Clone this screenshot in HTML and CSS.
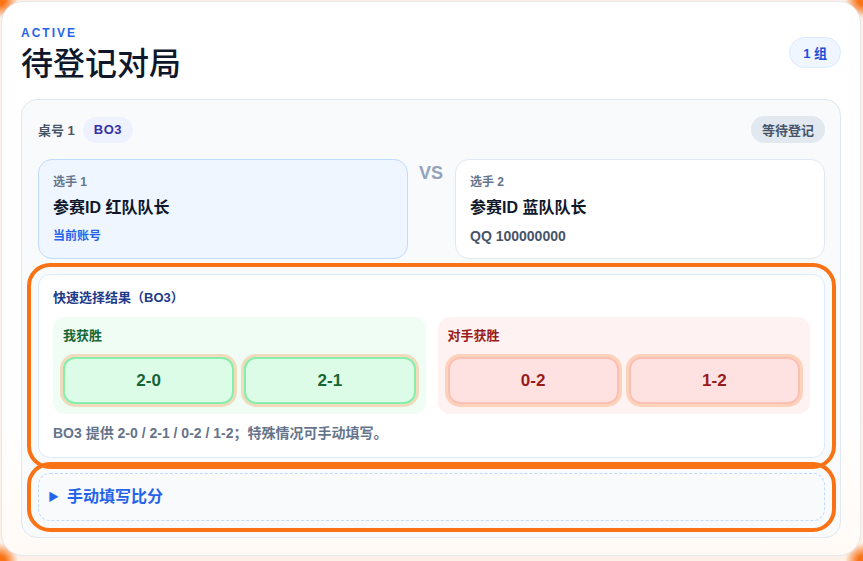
FILE: index.html
```html
<!DOCTYPE html>
<html lang="zh-CN">
<head>
<meta charset="utf-8">
<title>待登记对局</title>
<link rel="stylesheet" href="styles.css">
</head>
<body>
<section class="card">
  <header class="card-head">
    <div class="head-text">
      <div class="eyebrow">ACTIVE</div>
      <h1 class="title">待登记对局</h1>
    </div>
    <span class="count-pill">1 组</span>
  </header>

  <div class="match">
    <div class="match-head">
      <div class="table-info">
        <span class="table-no">桌号 1</span>
        <span class="bo-pill">BO3</span>
      </div>
      <span class="status-pill">等待登记</span>
    </div>

    <div class="players">
      <div class="player player-me">
        <div class="player-label">选手 1</div>
        <div class="player-name">参赛ID 红队队长</div>
        <div class="player-meta meta-me">当前账号</div>
      </div>
      <div class="vs">VS</div>
      <div class="player">
        <div class="player-label">选手 2</div>
        <div class="player-name">参赛ID 蓝队队长</div>
        <div class="player-meta">QQ 100000000</div>
      </div>
    </div>

    <div class="quick focused">
      <div class="quick-title">快速选择结果（BO3）</div>
      <div class="groups">
        <div class="group group-win">
          <div class="group-label">我获胜</div>
          <div class="btns">
            <button class="score score-win">2-0</button>
            <button class="score score-win">2-1</button>
          </div>
        </div>
        <div class="group group-lose">
          <div class="group-label">对手获胜</div>
          <div class="btns">
            <button class="score score-lose">0-2</button>
            <button class="score score-lose">1-2</button>
          </div>
        </div>
      </div>
      <div class="hint">BO3 提供 2-0 / 2-1 / 0-2 / 1-2；特殊情况可手动填写。</div>
    </div>

    <details class="manual focused">
      <summary class="manual-summary"><span class="tri">▶</span>手动填写比分</summary>
    </details>
  </div>
</section>
</body>
</html>
```

FILE: styles.css
```css
* { box-sizing: border-box; }

html, body {
  margin: 0;
  height: 100%;
}

body {
  padding: 1px 2px 4px 1px;
  font-family: "Liberation Sans", "Noto Sans CJK SC", sans-serif;
  color: #0f172a;
  background:
    radial-gradient(circle at 0 0, #f97316 0, #f97316 5px, rgba(249,115,22,0) 18px),
    radial-gradient(circle at 100% 0, #f97316 0, #f97316 5px, rgba(249,115,22,0) 18px),
    radial-gradient(circle at 0 100%, #f97316 0, #f97316 5px, rgba(249,115,22,0) 18px),
    radial-gradient(circle at 100% 100%, #f97316 0, #f97316 5px, rgba(249,115,22,0) 18px),
    #fcf0e8;
}

.card {
  border: 1px solid #e5e7eb;
  border-radius: 22px;
  background: linear-gradient(180deg, #ffffff 0%, #ffffff 75%, #fffaf6 100%);
  padding: 23px 19px 17px 19px;
}

.card-head {
  display: flex;
  justify-content: space-between;
  align-items: center;
  margin-bottom: 16px;
}

.eyebrow {
  font-size: 12px;
  line-height: 16px;
  font-weight: 700;
  letter-spacing: 2px;
  color: #2563eb;
}

.title {
  margin: 4px 0 0 0;
  font-size: 32px;
  line-height: 38px;
  font-weight: 500;
  color: #0f172a;
}

.count-pill {
  display: inline-flex;
  align-items: center;
  height: 31px;
  padding: 0 13px;
  margin-bottom: 3px;
  border-radius: 999px;
  border: 1px solid #dbeafe;
  background: #eff6ff;
  color: #1d4ed8;
  font-size: 13px;
  font-weight: 700;
}

.match {
  border: 1px solid #e2e8f0;
  border-radius: 16px;
  background: #f8fafc;
  padding: 16px 15px 16px 16px;
  display: flex;
  flex-direction: column;
  gap: 15px;
}

.match-head {
  display: flex;
  justify-content: space-between;
  align-items: center;
  margin-bottom: 1px;
}

.table-info {
  display: flex;
  align-items: center;
  gap: 8px;
}

.table-no {
  font-size: 13px;
  font-weight: 700;
  color: #475569;
}

.bo-pill {
  display: inline-flex;
  align-items: center;
  height: 26px;
  padding: 0 11px;
  border-radius: 999px;
  background: #eef2ff;
  color: #3730a3;
  font-size: 13px;
  font-weight: 700;
  letter-spacing: 0.5px;
}

.status-pill {
  display: inline-flex;
  align-items: center;
  height: 27px;
  padding: 0 11px;
  border-radius: 999px;
  background: #e2e8f0;
  color: #475569;
  font-size: 13px;
  font-weight: 700;
}

.players {
  display: grid;
  grid-template-columns: 1fr auto 1fr;
  gap: 11px;
}

.player {
  border: 1px solid #e2e8f0;
  border-radius: 14px;
  background: #ffffff;
  padding: 14px 14px 14px 14px;
}

.player-me {
  background: #eff6ff;
  border-color: #bfdbfe;
}

.player-label {
  font-size: 12px;
  line-height: 16px;
  font-weight: 700;
  color: #64748b;
}

.player-name {
  margin-top: 8px;
  font-size: 16px;
  line-height: 20px;
  font-weight: 700;
  color: #0f172a;
}

.player-meta {
  margin-top: 10px;
  font-size: 14px;
  line-height: 16px;
  font-weight: 700;
  color: #475569;
}

.meta-me {
  font-size: 12px;
  color: #2563eb;
}

.vs {
  width: 25px;
  padding-top: 4px;
  font-size: 18px;
  line-height: 20px;
  font-weight: 700;
  color: #94a3b8;
}

.focused {
  outline: 4px solid #f97316;
  outline-offset: 7px;
}

.quick {
  border: 1px solid #dbeafe;
  border-radius: 12px;
  background: #ffffff;
  padding: 14px 14px 15px 14px;
}

.quick-title {
  font-size: 13px;
  line-height: 18px;
  font-weight: 700;
  color: #1e3a8a;
  margin-bottom: 10px;
}

.groups {
  display: grid;
  grid-template-columns: 1fr 1fr;
  gap: 12px;
}

.group {
  border-radius: 12px;
  padding: 10px;
}

.group-win { background: #f0fdf4; }
.group-lose { background: #fef2f2; }

.group-label {
  font-size: 13px;
  line-height: 18px;
  font-weight: 700;
  margin-bottom: 12px;
}

.group-win .group-label { color: #166534; }
.group-lose .group-label { color: #991b1b; }

.btns {
  display: grid;
  grid-template-columns: 1fr 1fr;
  gap: 10px;
}

.score {
  height: 47px;
  border-radius: 12px;
  font-family: inherit;
  font-size: 17px;
  font-weight: 700;
  box-shadow: 0 0 0 3px rgba(249, 115, 22, 0.25);
  cursor: pointer;
}

.score-win {
  background: #dcfce7;
  border: 2px solid #86efac;
  color: #166534;
}

.score-lose {
  background: #fee2e2;
  border: 2px solid #fbc0b4;
  color: #991b1b;
}

.hint {
  margin-top: 10px;
  font-size: 14px;
  line-height: 18px;
  font-weight: 700;
  color: #64748b;
}

.manual {
  border: 1px dashed #bfdbfe;
  border-radius: 12px;
  background: #f8fafc;
}

.manual-summary {
  list-style: none;
  display: flex;
  align-items: center;
  padding: 15px 9px;
  font-size: 16px;
  line-height: 16px;
  font-weight: 700;
  color: #2563eb;
  cursor: pointer;
}

.manual-summary::-webkit-details-marker { display: none; }

.tri {
  font-size: 11px;
  margin-right: 8px;
  color: #2563eb;
}
```
